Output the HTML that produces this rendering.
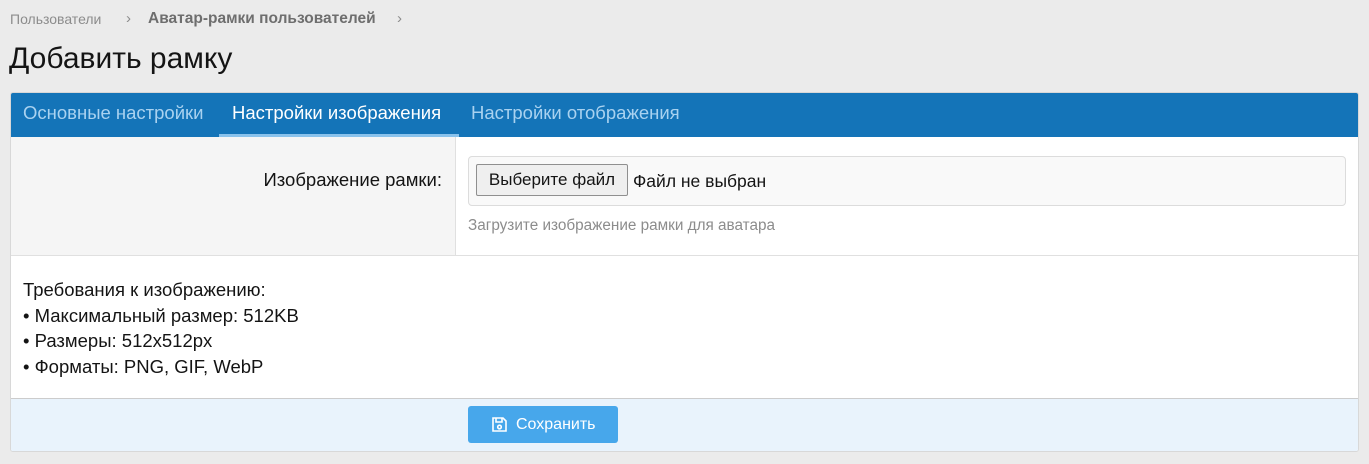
<!DOCTYPE html>
<html><head><meta charset="utf-8"><style>
body{margin:0;background:#ebebeb;font-family:"Liberation Sans",sans-serif;width:1369px;height:464px;overflow:hidden;position:relative;color:#141414}
.a{position:absolute;white-space:nowrap}
</style></head><body>
<div class="a" style="left:10px;top:11px;font-size:14px;color:#8c8c8c">Пользователи</div>
<div class="a" style="left:126px;top:10px;font-size:15px;color:#8c8c8c">›</div>
<div class="a" style="left:148px;top:10px;font-size:15.5px;color:#6e6e6e;font-weight:bold">Аватар-рамки пользователей</div>
<div class="a" style="left:397px;top:10px;font-size:15px;color:#8c8c8c">›</div>
<div class="a" style="left:9px;top:42px;font-size:30px;color:#141414">Добавить рамку</div>
<div class="a" style="left:10px;top:92px;width:1347px;height:358px;border:1px solid #d8d8d8;background:#fff;border-radius:3px;overflow:hidden">
 <div class="a" style="left:0;top:0;width:1348px;height:44px;background:#1474b8"></div>
 <div class="a" style="left:12px;top:9px;font-size:18.5px;color:#a9d2f0">Основные настройки</div>
 <div class="a" style="left:208px;top:0;width:240px;height:41px;border-bottom:3px solid #89c2ec"></div>
 <div class="a" style="left:221px;top:9px;font-size:18.5px;color:#fff">Настройки изображения</div>
 <div class="a" style="left:460px;top:9px;font-size:18.5px;color:#a9d2f0">Настройки отображения</div>
 <div class="a" style="left:0;top:44px;width:444px;height:118px;background:#f5f5f5;border-right:1px solid #e0e0e0"></div>
 <div class="a" style="left:0;top:162px;width:1348px;border-top:1px solid #e0e0e0"></div>
 <div class="a" style="left:0;top:76px;width:431px;text-align:right;font-size:18.5px">Изображение рамки:</div>
 <div class="a" style="left:457px;top:63px;width:876px;height:48px;border:1px solid #dcdcdc;border-radius:4px;background:#f9f9f9"></div>
 <div class="a" style="left:465px;top:71px;width:152px;height:32px;border:1px solid #8f8f8f;border-radius:2px;background:#efefef;box-sizing:border-box;font-size:17px;line-height:30px;text-align:center">Выберите файл</div>
 <div class="a" style="left:622px;top:78px;font-size:17.5px">Файл не выбран</div>
 <div class="a" style="left:457px;top:124px;font-size:15.3px;color:#8c8c8c">Загрузите изображение рамки для аватара</div>
 <div class="a" style="left:12px;top:184px;font-size:18.5px;line-height:25.5px">Требования к изображению:<br>• Максимальный размер: 512KB<br>• Размеры: 512x512px<br>• Форматы: PNG, GIF, WebP</div>
 <div class="a" style="left:0;top:305px;width:1348px;height:60px;background:#e9f3fc;border-top:1px solid #ccc"></div>
 <div class="a" style="left:457px;top:313px;width:150px;height:37px;background:#47a7eb;border-radius:3px;color:#fff;font-size:16px;line-height:37px">
  <svg class="a" style="left:23px;top:10px" width="17" height="17" viewBox="0 0 17 17" fill="none" stroke="#fff" stroke-width="1.6"><path d="M2 2h10l3 3v10H2z"/><path d="M5 2v4h6V2"/><circle cx="8.5" cy="11" r="1.8"/></svg>
  <span class="a" style="left:48px;top:0">Сохранить</span></div>
</div>
</body></html>
